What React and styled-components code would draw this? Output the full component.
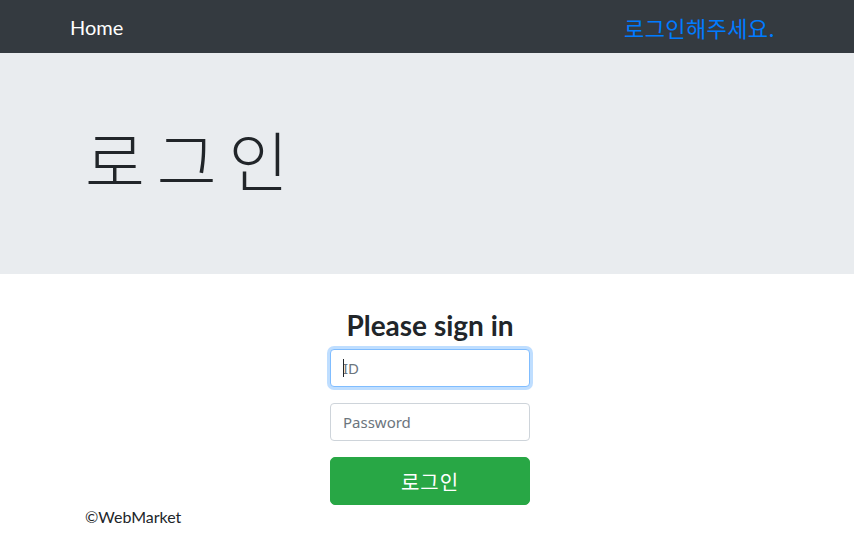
import React from "react";
import styled, { createGlobalStyle } from "styled-components";

const GlobalStyle = createGlobalStyle`
  body {
    margin: 0;
    background: #fff;
    color: #212529;
    font-family: Lato, "Noto Sans CJK KR", sans-serif;
  }
`;

const Navbar = styled.nav`
  background: #343a40;
  height: 53px;
  display: flex;
  align-items: center;
`;

const Container = styled.div`
  width: 720px;
  margin: 0 auto;
  box-sizing: border-box;
  padding: ${(props) => props.$pad || "0 15px"};
`;

const NavInner = styled(Container)`
  display: flex;
  justify-content: space-between;
  align-items: center;
`;

const Brand = styled.a`
  color: #fff;
  font-size: 20px;
  text-decoration: none;
  padding-left: 3px;
`;

const NavLink = styled.a`
  color: #007bff;
  font-family: "Noto Sans CJK KR", sans-serif;
  font-size: 22px;
  letter-spacing: 0.4px;
  text-decoration: none;
  padding-right: 12px;
`;

const Jumbotron = styled.div`
  background: #e9ecef;
  height: 221px;
  display: flex;
  align-items: center;
`;

const Title = styled.h1`
  margin: 0;
  font-family: "Noto Sans CJK KR", sans-serif;
  font-weight: 300;
  font-size: 65px;
  letter-spacing: 12px;
  line-height: 1;
  padding-left: 3px;
  margin-top: -10px;
`;

const FormBox = styled.form`
  width: 200px;
  margin-left: 248px;
  text-align: center;
`;

const Heading = styled.h3`
  margin: 34px 0 7px;
  font-size: 28px;
  font-weight: 700;
  line-height: 34px;
`;

const Field = styled.div`
  position: relative;
  margin-bottom: 16px;
`;

const Input = styled.input`
  display: block;
  width: 100%;
  box-sizing: border-box;
  height: 38px;
  padding: 6px 12px;
  font-family: "Noto Sans", sans-serif;
  font-size: 15px;
  color: #495057;
  border: 1px solid ${(p) => (p.$focus ? "#80bdff" : "#ced4da")};
  border-radius: 4px;
  outline: none;
  box-shadow: ${(p) => (p.$focus ? "0 0 0 3px rgba(0,123,255,.25)" : "none")};
  &::placeholder {
    color: #6c757d;
  }
`;

const Caret = styled.span`
  position: absolute;
  left: 13px;
  top: 10px;
  width: 1px;
  height: 18px;
  background: #212529;
`;

const Button = styled.button`
  display: block;
  width: 100%;
  height: 48px;
  background: #28a745;
  border: 1px solid #28a745;
  border-radius: 5px;
  color: #fff;
  font-family: "Noto Sans CJK KR", sans-serif;
  font-size: 20px;
  letter-spacing: 1px;
`;

const Footer = styled.footer`
  line-height: 24px;
  font-size: 16px;
  padding-left: 3px;
`;

export default function App() {
  return (
    <>
      <GlobalStyle />
      <Navbar>
        <NavInner $pad="0">
          <Brand href="#">Home</Brand>
          <NavLink href="#">로그인해주세요.</NavLink>
        </NavInner>
      </Navbar>
      <Jumbotron>
        <Container>
          <Title>로그인</Title>
        </Container>
      </Jumbotron>
      <Container>
        <FormBox>
          <Heading>Please sign in</Heading>
          <Field>
            <Input $focus placeholder="ID" />
            <Caret />
          </Field>
          <Field>
            <Input type="password" placeholder="Password" />
          </Field>
          <Button type="button">로그인</Button>
        </FormBox>
        <Footer>©WebMarket</Footer>
      </Container>
    </>
  );
}
